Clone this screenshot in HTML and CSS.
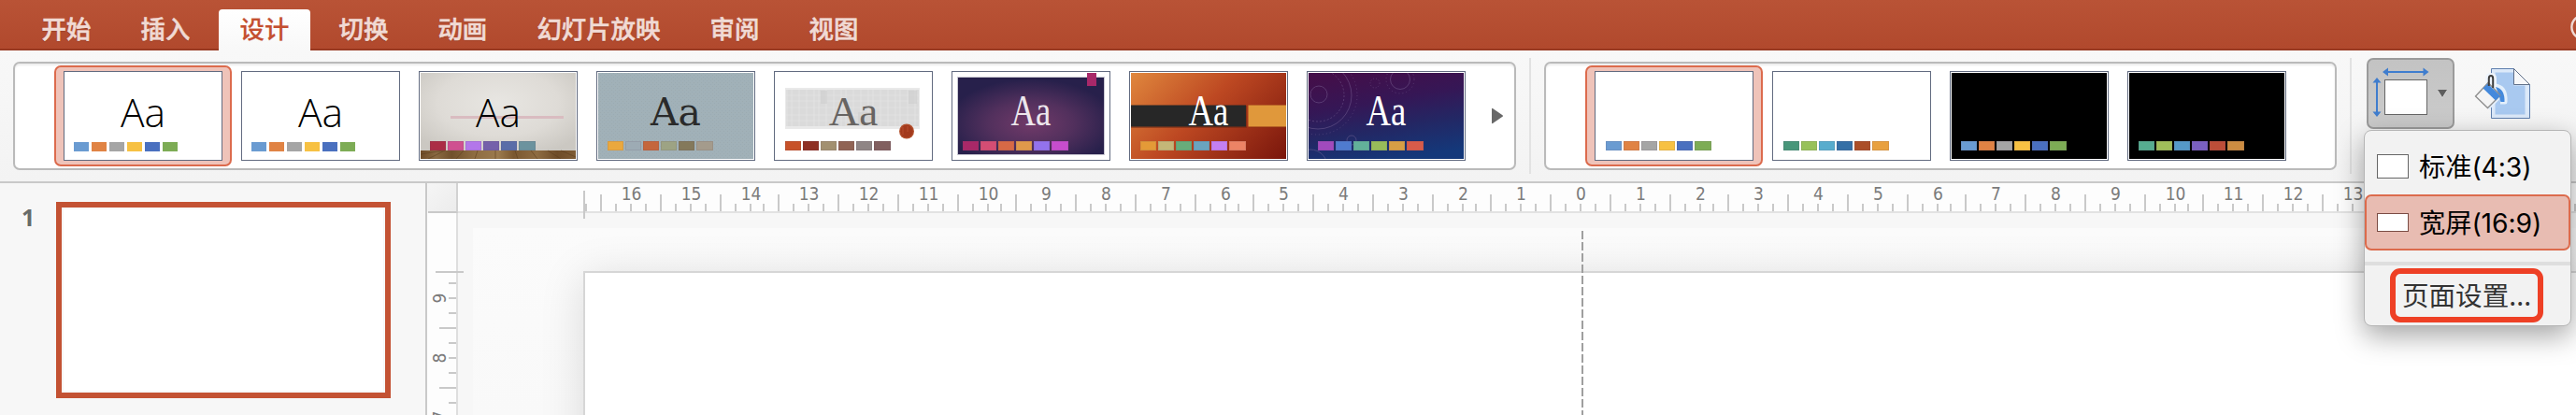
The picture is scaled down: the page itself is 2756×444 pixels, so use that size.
FILE: index.html
```html
<!DOCTYPE html>
<html lang="zh-CN">
<head>
<meta charset="utf-8">
<title>演示文稿</title>
<link rel="stylesheet" href="styles.css">
</head>
<body>
<div class="app">
  <nav class="tabs">
    <a class="tab">开始</a>
    <a class="tab">插入</a>
    <a class="tab active">设计</a>
    <a class="tab">切换</a>
    <a class="tab">动画</a>
    <a class="tab">幻灯片放映</a>
    <a class="tab">审阅</a>
    <a class="tab">视图</a>
    <svg class="help" width="6" height="30" viewBox="0 0 6 30"><circle cx="14" cy="15" r="12.6" fill="none" stroke="#f0d9d3" stroke-width="2.4"/></svg>
  </nav>

  <div class="ribbon">
    <div class="gallery themes">
      <div class="item selected"><div class="thumb plain"><span class="aa light">Aa</span><div class="sw"><i class="c1"></i><i class="c2"></i><i class="c3"></i><i class="c4"></i><i class="c5"></i><i class="c6"></i></div></div></div>
      <div class="item"><div class="thumb plain"><span class="aa light">Aa</span><div class="sw"><i class="c1"></i><i class="c2"></i><i class="c3"></i><i class="c4"></i><i class="c5"></i><i class="c6"></i></div></div></div>
      <div class="item"><div class="thumb">
        <svg class="art" viewBox="0 0 166 92"><defs><radialGradient id="wall" cx=".5" cy=".35" r=".65"><stop offset="0" stop-color="#e8e6e2"/><stop offset=".6" stop-color="#dedbd6"/><stop offset="1" stop-color="#cbc8c2"/></radialGradient><linearGradient id="wood"><stop offset="0" stop-color="#6d4a26"/><stop offset=".1" stop-color="#8a6a42"/><stop offset=".2" stop-color="#70502c"/><stop offset=".35" stop-color="#8f6d42"/><stop offset=".5" stop-color="#9b7a4e"/><stop offset=".6" stop-color="#7b5830"/><stop offset=".75" stop-color="#8e6c42"/><stop offset=".88" stop-color="#6e4c28"/><stop offset="1" stop-color="#7e5c36"/></linearGradient></defs>
        <rect width="166" height="92" fill="url(#wall)"/><rect x="32" y="46" width="121" height="3" fill="#d9bcc0"/><rect y="83" width="166" height="9" fill="url(#wood)"/><path d="M0 87l24-4M8 92l18-9M38 92l8-9M58 92l3-9M80 92v-9M104 92l-3-9M125 92l-7-9M150 92l-14-9M166 90l-16-7" stroke="#5d3f20" stroke-width=".8" opacity=".7"/></svg>
        <span class="aa light">Aa</span><div class="sw"><i class="g1"></i><i class="g2"></i><i class="g3"></i><i class="g4"></i><i class="g5"></i><i class="g6"></i></div></div></div>
      <div class="item"><div class="thumb">
        <svg class="art" viewBox="0 0 166 92"><defs><pattern id="dots" width="4" height="4" patternUnits="userSpaceOnUse"><rect width="4" height="4" fill="#a1b1b8"/><rect width="1" height="1" fill="#9aabb4"/><rect x="2" y="2" width="1" height="1" fill="#9dabb0"/></pattern></defs><rect width="166" height="92" fill="url(#dots)"/></svg>
        <span class="aa slab">Aa</span><div class="sw"><i class="h1"></i><i class="h2"></i><i class="h3"></i><i class="h4"></i><i class="h5"></i><i class="h6"></i></div></div></div>
      <div class="item"><div class="thumb">
        <svg class="art" viewBox="0 0 166 92"><defs><pattern id="weave" width="29" height="21" patternUnits="userSpaceOnUse"><rect width="29" height="21" fill="#dadada"/><path d="M0 3h29M0 9h29M0 16h29" stroke="#e2e2e2" stroke-width="1.500" opacity=".5"/><path d="M4 0v21M12 0v21M17 0v21M25 0v21" stroke="#e4e4e4" stroke-width="1.600" opacity=".5"/></pattern></defs><rect width="166" height="92" fill="#fff"/><rect x="10" y="16" width="144" height="44" fill="#e9e9e9"/><rect x="11" y="18" width="142" height="39" fill="url(#weave)"/><path d="M48 19h7v14h-7zM142 19h9v14h-9zM88 42h14v14H88z" fill="#cecece" opacity=".6"/></svg>
        <span class="aa gara">Aa</span>
        <svg class="art" viewBox="0 0 166 92"><circle cx="140" cy="62.500" r="8" fill="#b3522f"/><circle cx="140" cy="62.500" r="6.700" fill="#a33a1d"/><path d="M136 58v8M141 57v6" stroke="#c5593a" stroke-width="1" opacity=".6"/></svg>
        <div class="sw"><i class="k1"></i><i class="k2"></i><i class="k3"></i><i class="k4"></i><i class="k5"></i><i class="k6"></i></div></div></div>
      <div class="item"><div class="thumb">
        <svg class="art" viewBox="0 0 166 92"><defs><radialGradient id="ion" cx=".5" cy=".6" r=".58"><stop offset="0" stop-color="#713a69"/><stop offset=".5" stop-color="#52305d"/><stop offset="1" stop-color="#27204b"/></radialGradient></defs><rect width="166" height="92" fill="#fff"/><rect x="4" y="4" width="158" height="84" fill="#c9c8d2"/><rect x="5" y="5" width="156" height="82" fill="url(#ion)"/><rect x="143" width="10" height="14" fill="#a82869"/></svg>
        <span class="aa thin dim">Aa</span><div class="sw"><i class="m1"></i><i class="m2"></i><i class="m3"></i><i class="m4"></i><i class="m5"></i><i class="m6"></i></div></div></div>
      <div class="item"><div class="thumb">
        <svg class="art" viewBox="0 0 166 92"><defs><linearGradient id="berlin" gradientUnits="userSpaceOnUse" x1="18" y1="-18" x2="148" y2="110"><stop offset="0" stop-color="#e0873d"/><stop offset=".45" stop-color="#bd4822"/><stop offset="1" stop-color="#7a160c"/></linearGradient></defs><rect width="166" height="92" fill="url(#berlin)"/><rect y="35" width="124" height="24" fill="#6c2510" opacity=".5"/><rect x="126" y="34" width="40" height="25" fill="#8a2e10" opacity=".5"/><rect y="34.500" width="123" height="23" fill="#272727"/><rect x="125.500" y="34.500" width="41" height="23" fill="#e0983b"/></svg>
        <span class="aa thin">Aa</span><div class="sw"><i class="n1"></i><i class="n2"></i><i class="n3"></i><i class="n4"></i><i class="n5"></i><i class="n6"></i></div></div></div>
      <div class="item"><div class="thumb">
        <svg class="art" viewBox="0 0 166 92"><defs><linearGradient id="circuit" x1=".3" y1="0" x2=".6" y2="1"><stop offset="0" stop-color="#430f4a"/><stop offset=".35" stop-color="#351756"/><stop offset=".65" stop-color="#232764"/><stop offset="1" stop-color="#14387a"/></linearGradient></defs><rect width="166" height="92" fill="url(#circuit)"/><g fill="none" stroke="#8d78a8" opacity=".38"><circle cx="11" cy="23" r="9"/><circle cx="10" cy="24" r="28" stroke-dasharray="2 2"/><circle cx="10" cy="24" r="36"/><circle cx="10" cy="24" r="42" stroke-dasharray="1 3"/><circle cx="98" cy="7" r="10.500"/><circle cx="98" cy="7" r="15" stroke-dasharray="1 3"/><circle cx="71" cy="11" r="5" stroke-dasharray="1 2"/><circle cx="46" cy="72" r="5"/><circle cx="2" cy="100" r="18"/></g></svg>
        <span class="aa thin">Aa</span><div class="sw"><i class="p1"></i><i class="p2"></i><i class="p3"></i><i class="p4"></i><i class="p5"></i><i class="p6"></i></div></div></div>
      <svg class="more" width="12" height="18" viewBox="0 0 12 18"><path d="M0 1.500Q0 .5 1 1L11.500 8.200Q12.500 9 11.500 9.800L1 17Q0 17.500 0 16.500z" fill="#686868"/></svg>
    </div>
    <div class="sep"></div>
    <div class="gallery variants">
      <div class="item selected"><div class="thumb"><div class="sw"><i class="c1"></i><i class="c2"></i><i class="c3"></i><i class="c4"></i><i class="c5"></i><i class="c6"></i></div></div></div>
      <div class="item"><div class="thumb"><div class="sw"><i class="q1"></i><i class="q2"></i><i class="q3"></i><i class="q4"></i><i class="q5"></i><i class="q6"></i></div></div></div>
      <div class="item"><div class="thumb black"><div class="sw"><i class="c1"></i><i class="c2"></i><i class="c3"></i><i class="c4"></i><i class="c5"></i><i class="c6"></i></div></div></div>
      <div class="item"><div class="thumb black"><div class="sw"><i class="r1"></i><i class="r2"></i><i class="r3"></i><i class="r4"></i><i class="r5"></i><i class="r6"></i></div></div></div>
    </div>
    <div class="sep"></div>
    <div class="size-wrap">
      <button class="size-btn">
        <svg width="90" height="72" viewBox="0 0 90 72">
          <rect x="17.500" y="21.500" width="45" height="37" fill="#fff" stroke="#666"/>
          <g stroke="#3f7dce" stroke-width="2" fill="none"><path d="M18 13h42M9 22v34"/></g>
          <g fill="#3f7dce"><path d="M15 13l6-4.500v9zM64.500 13l-6-4.500v9zM9 19l-4.500 5.500h9zM9 61l-4.500-5.500h9z"/></g>
          <path d="M74 33h10l-5 8z" fill="#fff" opacity=".5"/><path d="M74 32h10l-5 8z" fill="#5e5e5e"/>
        </svg>
      </button>
      <div class="menu">
        <div class="opt"><i class="shape r43"></i><span>标准(4:3)</span></div>
        <div class="opt on"><i class="shape r169"></i><span>宽屏(16:9)</span></div>
        <div class="rule"></div>
        <div class="setup">页面设置...</div>
      </div>
    </div>
    <svg class="format" width="62" height="58" viewBox="0 0 62 58">
      <path d="M18.500 1.500h24l17 17v36h-41z" fill="#dce9f9" stroke="#5f7fae"/>
      <path d="M22.500 5.500h20v14h12v31h-32z" fill="#a9c9f0"/>
      <path d="M42.500 1.500l17 17h-17z" fill="#f7f8fa" stroke="#5f6f88"/>
      <path d="M15 16.500L28 30 14.500 43.500M22 20q12 1 11 17h-5" fill="none" stroke="#e4effb" stroke-width="5" stroke-linejoin="round"/>
      <path d="M15 21v-9q0-3 3-3t3 3v11" fill="none" stroke="#eef4fc" stroke-width="6"/>
      <path d="M23 21q10 2 9.500 16h-4q-1-3-2-8z" fill="#4489dc"/>
      <path d="M1.500 31L15 16.500 28 30 14.500 43.500z" fill="#f4f4f4" stroke="#8c8c8c" stroke-width="1.300"/>
      <path d="M9.500 22.500l5-5L28 30.500l-5 5z" fill="#4489dc"/>
      <path d="M15.800 20v-8q0-3 2.200-3t2.200 3v10" fill="none" stroke="#3d3d3d" stroke-width="2"/>
    </svg>
  </div>

  <div class="workspace">
    <aside class="slides">
      <span class="num">1</span>
      <div class="slide"></div>
    </aside>
    <main class="editor">
      <div class="corner"></div>
      <svg class="hruler" id="hruler" width="2266" height="30"></svg>
      <svg class="vruler" id="vruler" width="31" height="216"></svg>
      <div class="canvas">
        <div class="stage"><div class="page"></div></div>
        <svg class="guide" width="2" height="197"><path d="M1 0v197" stroke="#9f9f9f" stroke-width="2" stroke-dasharray="9 3"/></svg>
      </div>
    </main>
  </div>
</div>
<script src="ruler.js"></script>
</body>
</html>
```
FILE: styles.css
```css
* { box-sizing: border-box; }
body {
  margin: 0;
  overflow: hidden;
  background: #f7f7f7;
  font-family: "Noto Sans CJK SC", sans-serif;
}
svg { display: block; }
.app { width: 2756px; height: 444px; display: flex; flex-direction: column; overflow: hidden; }

.tabs {
  height: 54px;
  flex: none;
  display: flex;
  padding: 10px 0 0 18px;
  background: linear-gradient(#b95336, #b1492d 52px, #993a22 52px);
}
.tab {
  height: 44px;
  padding: 0 26.6px;
  font-size: 26.4px;
  font-weight: 500;
  line-height: 39px;
  color: #f1dad4;
  -webkit-text-stroke: .6px currentColor;
  text-shadow: 0 1px 1px rgba(90, 30, 10, .4);
  white-space: nowrap;
}
.tab.active {
  margin: 0 4px;
  padding: 0 22.6px;
  color: #c44f30;
  background: linear-gradient(#fff, #f8f8f8);
  border-radius: 4px 4px 0 0;
  text-shadow: none;
  -webkit-text-stroke-width: .2px;
}
.help { margin: 4px 0 0 auto; }

.ribbon {
  height: 142px;
  flex: none;
  display: flex;
  align-items: flex-start;
  padding: 8px 0 0 14px;
  background: linear-gradient(#f8f8f8, #f3f3f3);
  border-bottom: 2px solid #c9c9c9;
}
.gallery {
  height: 116px;
  margin-top: 4px;
  padding: 2px 0 0 42px;
  display: flex;
  background: #fff;
  border: 2px solid #bababa;
  border-radius: 7px;
  box-shadow: inset 0 2px 2px rgba(0, 0, 0, .08);
}
.themes { width: 1608px; }
.variants { width: 848px; }
.item {
  width: 190px;
  height: 108px;
  flex: none;
  padding: 4px 8px;
  border: 2px solid transparent;
  border-radius: 7px;
}
.item.selected { background: #efc3b9; border-color: #dc6b4d; }
.thumb {
  position: relative;
  width: 170px;
  height: 96px;
  border: 1px solid #626b80;
  padding: 1px;
  background: #fff;
}
.thumb.black { background: #000; box-shadow: inset 0 0 0 1px #fff; }
.art { position: absolute; left: 1px; top: 1px; width: 166px; height: 92px; }
.sw { position: absolute; left: 11px; top: 74px; display: flex; gap: 2px; }
.sw i { width: 17.1px; height: 10px; box-shadow: inset 0 0 0 1px rgba(90, 70, 90, .13); }
.plain .sw { left: 10px; top: 75px; gap: 3px; }
.plain .sw i { width: 16px; box-shadow: none; }
.aa {
  position: absolute;
  left: 0;
  top: 19px;
  width: 168px;
  text-align: center;
  line-height: 46px;
  color: #000;
}
.light { top: 20px; font-family: "Open Sans", sans-serif; font-weight: 300; font-size: 42.5px; }
.slab { top: 20px; font-family: "DejaVu Serif", serif; font-size: 41px; color: #2a2a2a; }
.gara { font-family: "Liberation Serif", serif; font-size: 45px; color: #676462; }
.thin { font-family: "Liberation Serif", serif; font-size: 46px; color: #fff; transform: scaleX(.8); }
.dim { color: #ece6ec; }
.more { margin: 45px 0 0 18px; }
.sep { width: 2px; height: 124px; margin: 0 14px; background: #e2e2e2; }

.c1 { background: #6a9bd1; } .c2 { background: #e08344; } .c3 { background: #a5a5a5; } .c4 { background: #f7c143; } .c5 { background: #4a70bf; } .c6 { background: #7dac55; }
.g1 { background: #ab2d45; } .g2 { background: #cf5090; } .g3 { background: #b377ea; } .g4 { background: #7560aa; } .g5 { background: #5a6da8; } .g6 { background: #6c939e; }
.h1 { background: #eaa83e; } .h2 { background: #9dabb4; } .h3 { background: #c4663c; } .h4 { background: #9da384; } .h5 { background: #84795b; } .h6 { background: #a49b8c; }
.k1 { background: #c75229; } .k2 { background: #8f3024; } .k3 { background: #a29070; } .k4 { background: #906354; } .k5 { background: #8f8585; } .k6 { background: #815f5f; }
.m1 { background: #a92868; } .m2 { background: #d44d74; } .m3 { background: #d76946; } .m4 { background: #df994b; } .m5 { background: #9372ed; } .m6 { background: #c64dcd; }
.n1 { background: #e49a37; } .n2 { background: #c4b678; } .n3 { background: #68ac7a; } .n4 { background: #6aa4be; } .n5 { background: #c47ff2; } .n6 { background: #ec8365; }
.p1 { background: #a14abd; } .p2 { background: #4f7bcf; } .p3 { background: #62b19a; } .p4 { background: #98bc5a; } .p5 { background: #d79e45; } .p6 { background: #d85b4a; }
.q1 { background: #48967a; } .q2 { background: #97c15a; } .q3 { background: #58accd; } .q4 { background: #356fa6; } .q5 { background: #ab4e28; } .q6 { background: #e8a03f; }
.r1 { background: #56ac90; } .r2 { background: #a0be5a; } .r3 { background: #5599c8; } .r4 { background: #7a60c0; } .r5 { background: #bc4e38; } .r6 { background: #cc8d42; }

.size-wrap { position: relative; margin-left: 2px; }
.size-btn {
  display: block;
  width: 94px;
  height: 76px;
  padding: 0;
  background: linear-gradient(#c3c3c3, #cbcbcb);
  border: 2px solid #9b9b9b;
  border-radius: 7px;
}
.format { margin: 10px 0 0 21px; }

.menu {
  position: absolute;
  z-index: 5;
  left: -3px;
  top: 77px;
  width: 222px;
  height: 210px;
  padding-top: 8px;
  background: #f2f2f2;
  border: 1px solid #b5b5b5;
  border-radius: 8px;
  box-shadow: 0 10px 30px rgba(0, 0, 0, .36);
  color: #000;
}
.opt {
  display: flex;
  align-items: center;
  gap: 11px;
  height: 60px;
  padding-left: 11px;
  font-family: Inter, "Noto Sans CJK SC", sans-serif;
  font-size: 28.3px;
  line-height: 40px;
  letter-spacing: -.1px;
  white-space: nowrap;
  border: 2px solid transparent;
  border-radius: 7px;
}
.opt span { padding-top: 2px; }
.opt.on { background: #e8bcb2; border-color: #dc6b4d; }
.shape { width: 34px; background: #fff; border: 1px solid #666; }
.r43 { height: 26px; }
.r169 { height: 20px; border-color: #7a4c44; }
.rule { height: 4px; margin-top: 12px; background: #dedede; }
.setup {
  width: 164px;
  height: 58px;
  margin: 3px 0 0 27px;
  border: 6px solid #ee4025;
  border-radius: 11px;
  font-size: 28.6px;
  line-height: 44px;
  text-align: center;
  color: #333;
  white-space: nowrap;
}

.workspace { flex: 1; display: flex; min-height: 0; }
.slides {
  width: 457px;
  flex: none;
  display: flex;
  padding: 20px 0 0 23px;
  border-right: 2px solid #c9c9c9;
  background: #f7f7f7;
}
.num { width: 37px; font: bold 25px/33px "Open Sans", sans-serif; color: #676b69; }
.slide { width: 358px; height: 210px; border: 6px solid #c35233; background: #fff; box-shadow: inset 0 0 0 2px #f7f7f7; }
.editor { flex: 1; display: grid; grid-template-columns: 33px 1fr; grid-template-rows: 32px 1fr; min-width: 0; }
.corner { background: linear-gradient(135deg, #f5f5f5, #ececec); border-right: 2px solid #d2d2d2; border-bottom: 2px solid #c9c9c9; margin-left: 1px; }
.hruler, .vruler { overflow: visible; background: #fdfdfd; box-sizing: content-box; position: relative; z-index: 1; }
.hruler { border-bottom: 2px solid #e2e2e2; }
.vruler { border-right: 2px solid #dedede; }
.hruler text, .vruler text { font-family: "DejaVu Sans Condensed", "DejaVu Sans", sans-serif; font-stretch: condensed; font-size: 19px; fill: #7b7b7b; text-anchor: middle; }
.canvas { position: relative; overflow: hidden; padding: 16px 0 0 16px; background: #f7f7f7; }
.stage { height: 200px; padding: 46px 0 0 118px; background: linear-gradient(#fbfbfb, #f9f9f9); overflow: hidden; }
.page { width: 2136px; height: 1200px; background: #fff; border: 2px solid #d6d6d6; box-shadow: 0 6px 44px rgba(0, 0, 0, .13); }
.guide { position: absolute; left: 1202px; top: 19px; }
```
FILE: ruler.js
```js
const NS = 'http://www.w3.org/2000/svg';
const STEP = 15.875;
const snap = v => 2 * Math.round(v / 2);

function rect(svg, x, y, w, h) {
  const r = document.createElementNS(NS, 'rect');
  const attrs = { x, y, width: w, height: h, fill: '#c9c9c9' };
  for (const k in attrs) r.setAttribute(k, attrs[k]);
  svg.appendChild(r);
}

function label(svg, x, y, text, rotated) {
  const t = document.createElementNS(NS, 'text');
  t.setAttribute('x', x);
  t.setAttribute('y', y);
  if (rotated) t.setAttribute('transform', `rotate(-90 ${x} ${y})`);
  t.textContent = text;
  svg.appendChild(t);
}

const h = document.getElementById('hruler');
for (let k = -67; k <= 67; k++) {
  const x = snap(1200 + k * STEP);
  const half = Math.abs(k) % 4 === 2;
  rect(h, x, half ? 12 : 22, 2, half ? 18 : 8);
  if (k % 4 === 0) label(h, x + 1.5, 18, Math.abs(k / 4));
}
rect(h, 134, 8, 2, 30);

const v = document.getElementById('vruler');
for (let k = 0; k <= 9; k++) {
  const y = snap(74 + k * STEP);
  const half = k % 4 === 3;
  rect(v, half ? 13 : 23, y, half ? 18 : 8, 2);
  if (k % 4 === 1) label(v, 19.5, y + 1, 9 - (k - 1) / 4, true);
}
rect(v, 9, 62, 30, 2);
```
